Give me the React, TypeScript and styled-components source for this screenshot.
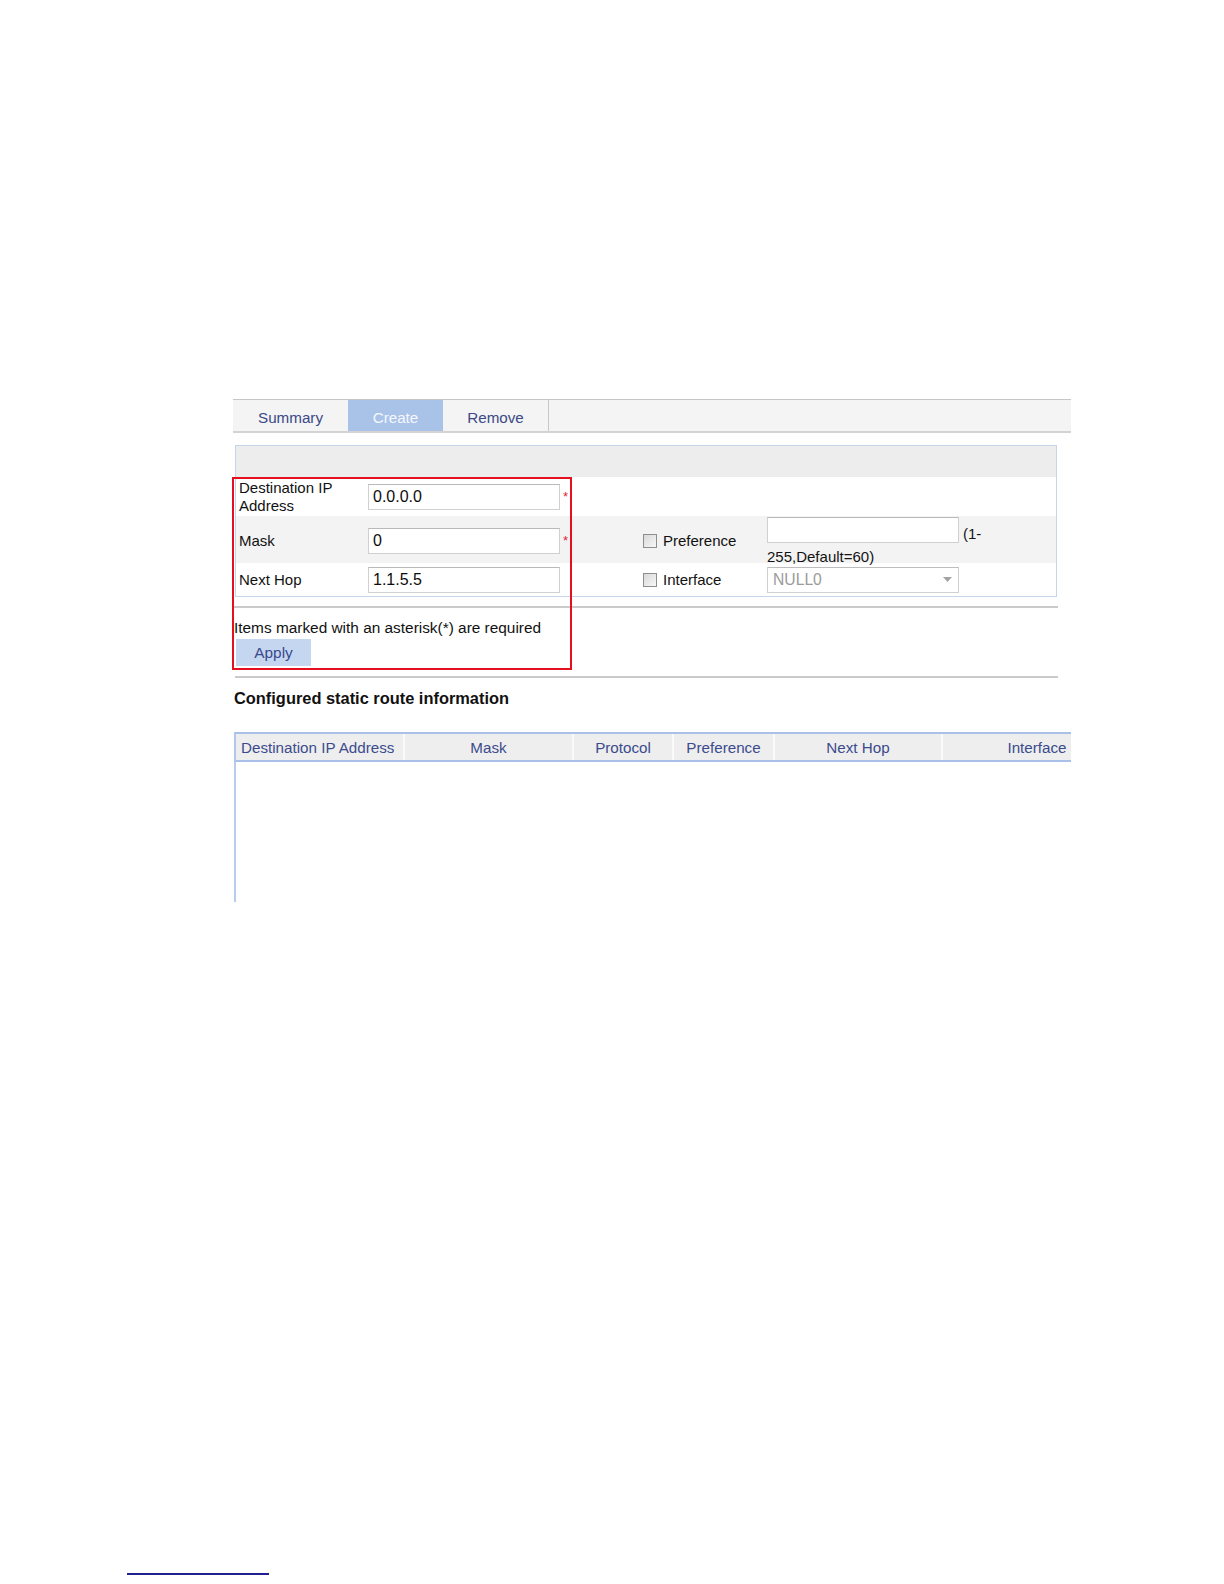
import React from 'react'
import styled, { createGlobalStyle } from 'styled-components'

const GlobalStyle = createGlobalStyle`
  html, body {
    margin: 0;
    padding: 0;
    background: #fff;
  }
  body {
    font-family: "Liberation Sans", Arial, sans-serif;
    font-size: 15.4px;
    color: #141414;
  }
`

const Page = styled.div`
  min-height: 1584px;
  display: flex;
  flex-direction: column;
`

const Shot = styled.div`
  position: relative;
  margin: 399px 0 0 232px;
  width: 839px;
  height: 503px;
  overflow: hidden;
  display: flex;
  flex-direction: column;
`

const TabBar = styled.div`
  margin-left: 1px;
  height: 34px;
  box-sizing: border-box;
  display: flex;
  background: #f4f4f4;
  border-top: 1px solid #c6c6c6;
  border-bottom: 2px solid #d3d3d3;
`

const Tab = styled.div<{ $active?: boolean; $w: number; $last?: boolean }>`
  width: ${(p) => p.$w}px;
  box-sizing: border-box;
  padding-top: 10px;
  line-height: 16px;
  font-size: 15.2px;
  text-align: center;
  background: ${(p) => (p.$active ? '#a9c2e8' : 'transparent')};
  color: ${(p) => (p.$active ? '#f4f7fd' : '#3b4987')};
  border-right: ${(p) => (p.$last ? '1px solid #c8c8c8' : 'none')};
`

const FormBox = styled.div`
  margin: 12px 0 0 3px;
  width: 822px;
  box-sizing: border-box;
  border: 1px solid #c5d5ea;
`

const FormHeader = styled.div`
  height: 31px;
  background: #ededed;
`

const Row = styled.div<{ $h: number; $shade?: boolean }>`
  height: ${(p) => p.$h}px;
  display: grid;
  grid-template-columns: 132px 192px 83px 124px 1fr;
  align-items: center;
  font-size: 15px;
  background: ${(p) => (p.$shade ? '#f3f3f3' : '#fff')};
`

const Label = styled.div`
  padding-left: 3px;
  line-height: 18px;
  color: #111;
`

const TextBox = styled.input`
  width: 192px;
  height: 26px;
  box-sizing: border-box;
  margin: 0;
  padding: 0 4px;
  border: 1px solid #d0d0d0;
  border-top-color: #b9b9b9;
  background: #fff;
  font-family: inherit;
  font-size: 16px;
  color: #0d0d0d;
  outline: none;
`

const Star = styled.span`
  padding-left: 3px;
  color: #e3232f;
  font-size: 13px;
  line-height: 12px;
`

const CheckLabel = styled.label`
  display: flex;
  align-items: center;
  gap: 6px;
  color: #111;
`

const Check = styled.span`
  width: 14px;
  height: 14px;
  box-sizing: border-box;
  border: 1px solid #8e8e8e;
  background: linear-gradient(135deg, #d9d9d9, #f7f7f7);
`

const PrefField = styled.div`
  align-self: start;
  padding-top: 1px;
`

const PrefLine = styled.div`
  display: flex;
  align-items: flex-end;
`

const Hint = styled.span<{ $inline?: boolean }>`
  display: block;
  line-height: 16px;
  margin: ${(p) => (p.$inline ? '0 0 1px 4px' : '6px 0 0 0')};
`

const Select = styled.div`
  width: 192px;
  height: 26px;
  box-sizing: border-box;
  display: flex;
  align-items: center;
  justify-content: space-between;
  padding: 0 6px 0 5px;
  border: 1px solid #d0d0d0;
  border-top-color: #bdbdbd;
  background: #fff;
  font-size: 15.7px;
  color: #9b9b9b;
`

const Rule = styled.div<{ $top: number; $left: number }>`
  margin: ${(p) => p.$top}px 0 0 ${(p) => p.$left}px;
  width: ${(p) => 826 - p.$left}px;
  height: 2px;
  background: #cacaca;
`

const Note = styled.div`
  margin: 12px 0 0 2px;
  line-height: 16px;
  color: #111;
`

const ApplyButton = styled.button`
  margin: 3px 0 0 4px;
  width: 75px;
  height: 27px;
  border: none;
  padding: 0;
  background: #c5d6f1;
  color: #3a4a8c;
  font: inherit;
`

const SectionTitle = styled.div`
  margin: 10px 0 0 2px;
  font-weight: bold;
  font-size: 16.4px;
  line-height: 20px;
  color: #111;
`

const TableHead = styled.div`
  margin: 24px 0 0 2px;
  width: 897px;
  flex-shrink: 0;
  height: 30px;
  box-sizing: border-box;
  display: flex;
  background: #eeeeee;
  border-top: 2px solid #a9c1e8;
  border-bottom: 2px solid #a9c1e8;
  border-left: 2px solid #b2c7ea;
`

const HeadCell = styled.div<{ $w: number; $left?: boolean }>`
  width: ${(p) => p.$w}px;
  flex-shrink: 0;
  box-sizing: border-box;
  display: flex;
  align-items: center;
  justify-content: ${(p) => (p.$left ? 'flex-start' : 'center')};
  padding-left: ${(p) => (p.$left ? '5px' : '0')};
  border-left: ${(p) => (p.$left ? 'none' : '2px solid #fafafa')};
  font-size: 15.2px;
  color: #3c4b8d;
  white-space: nowrap;
`

const TableBody = styled.div`
  flex: 1;
  margin-left: 2px;
  border-left: 2px solid #b8cdec;
`

const Callout = styled.div`
  position: absolute;
  left: 0;
  top: 78px;
  width: 340px;
  height: 193px;
  box-sizing: border-box;
  border: 2px solid #e4101f;
  pointer-events: none;
`

const FootRule = styled.div`
  margin: auto 0 9px 127px;
  width: 142px;
  height: 2px;
  background: #1f1f8f;
`

const columns = [
  { name: 'Destination IP Address', w: 167, left: true },
  { name: 'Mask', w: 169 },
  { name: 'Protocol', w: 100 },
  { name: 'Preference', w: 101 },
  { name: 'Next Hop', w: 168 },
  { name: 'Interface', w: 190 },
]

const Arrow = () => (
  <svg width='9' height='5' viewBox='0 0 9 5'>
    <path d='M0 0 L9 0 L4.5 5 Z' fill='#a3a3a3' />
  </svg>
)

export default function App() {
  return (
    <Page>
      <GlobalStyle />
      <Shot>
        <TabBar>
          <Tab $w={115}>Summary</Tab>
          <Tab $w={95} $active>
            Create
          </Tab>
          <Tab $w={106} $last>
            Remove
          </Tab>
        </TabBar>

        <FormBox>
          <FormHeader />
          <Row $h={39}>
            <Label>
              Destination IP
              <br />
              Address
            </Label>
            <TextBox defaultValue='0.0.0.0' />
            <Star>*</Star>
          </Row>
          <Row $h={47} $shade>
            <Label>Mask</Label>
            <TextBox defaultValue='0' />
            <Star>*</Star>
            <CheckLabel>
              <Check />
              Preference
            </CheckLabel>
            <PrefField>
              <PrefLine>
                <TextBox defaultValue='' />
                <Hint $inline>(1-</Hint>
              </PrefLine>
              <Hint>255,Default=60)</Hint>
            </PrefField>
          </Row>
          <Row $h={33}>
            <Label>Next Hop</Label>
            <TextBox defaultValue='1.1.5.5' />
            <span />
            <CheckLabel>
              <Check />
              Interface
            </CheckLabel>
            <Select>
              NULL0
              <Arrow />
            </Select>
          </Row>
        </FormBox>

        <Rule $top={9} $left={2} />
        <Note>Items marked with an asterisk(*) are required</Note>
        <div>
          <ApplyButton>Apply</ApplyButton>
        </div>
        <Rule $top={10} $left={3} />

        <SectionTitle>Configured static route information</SectionTitle>
        <TableHead>
          {columns.map((c) => (
            <HeadCell key={c.name} $w={c.w} $left={c.left}>
              {c.name}
            </HeadCell>
          ))}
        </TableHead>
        <TableBody />

        <Callout />
      </Shot>
      <FootRule />
    </Page>
  )
}
